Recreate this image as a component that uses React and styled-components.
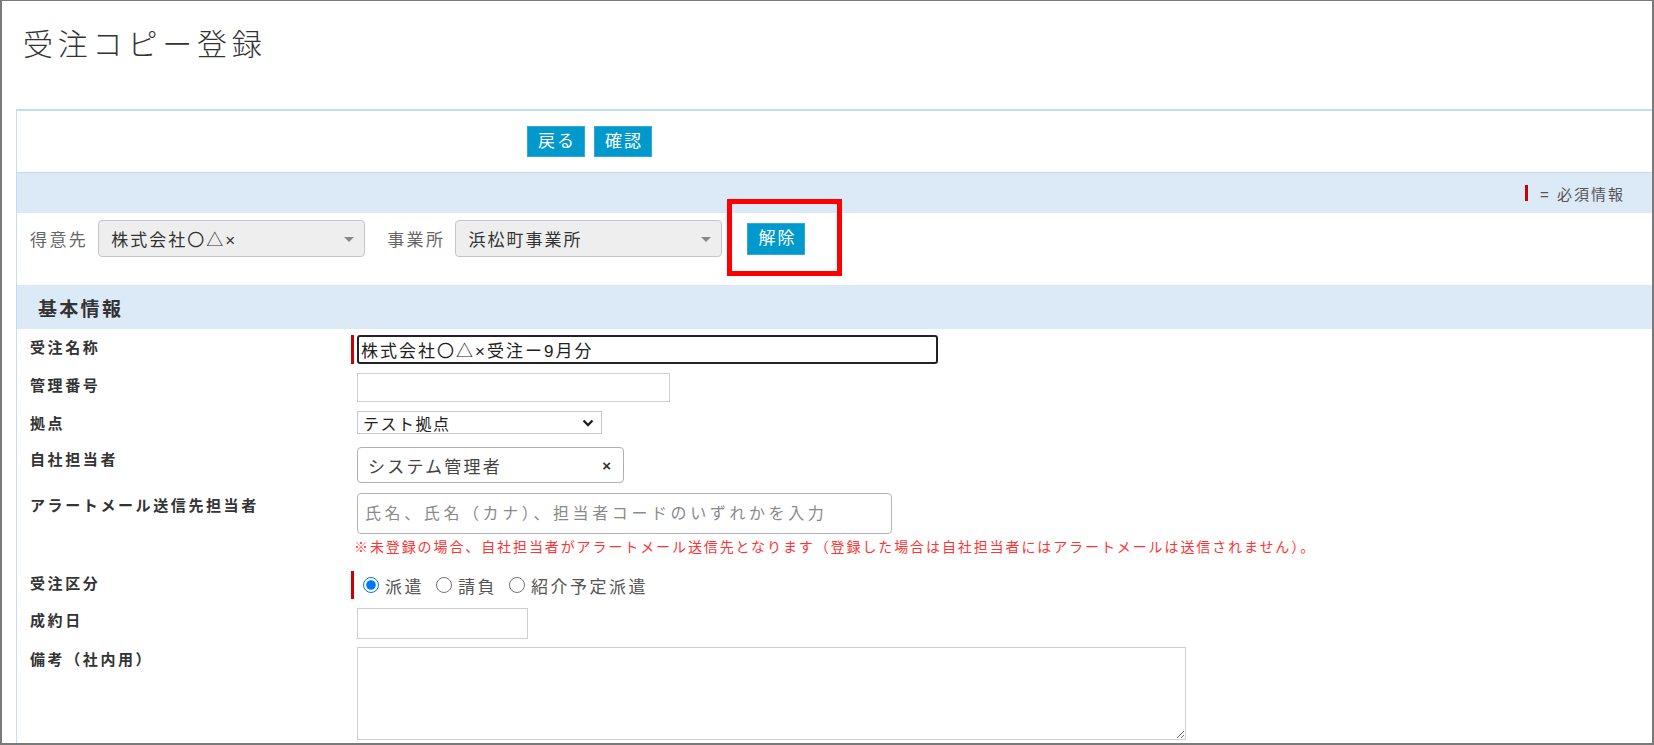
import styled, { createGlobalStyle } from 'styled-components';

const GlobalStyle = createGlobalStyle`
  html, body {
    margin: 0;
    padding: 0;
    background: #fff;
  }
  body {
    font-family: 'Liberation Sans', 'Noto Sans CJK JP', sans-serif;
    color: #333;
  }
  *, *::before, *::after {
    box-sizing: border-box;
  }
`;

const Frame = styled.div`
  height: 100vh;
  border: 2px solid #7a7a7a;
  border-top-width: 1px;
  padding-left: 14px;
  overflow: hidden;
`;

const PageTitle = styled.h1`
  margin: 24px 0 44px 7px;
  font-size: 30px;
  font-weight: 300;
  line-height: 40px;
  letter-spacing: 4.8px;
  color: #333;
`;

const Panel = styled.div`
  border-top: 2px solid #c4dcf2;
  border-left: 1px solid #c4dcf2;
  min-height: 100%;
`;

const Toolbar = styled.div`
  display: flex;
  align-items: center;
  gap: 9px;
  height: 61px;
  padding-left: 510px;
`;

const Button = styled.button`
  height: ${(p) => p.$h || 31}px;
  padding: 0 8px 0 10px;
  border: 1px solid #35a9d4;
  background: #0099cc;
  color: #fff;
  font-family: inherit;
  font-size: 17px;
  line-height: 1;
  letter-spacing: 2px;
  cursor: pointer;
`;

const RequiredBar = styled.div`
  display: flex;
  justify-content: flex-end;
  align-items: center;
  gap: 12px;
  height: 41px;
  padding-right: 27px;
  border-top: 1px solid #c4dcf2;
  background: #dce9f7;
  font-size: 15px;
  letter-spacing: 2px;
  color: #555;
`;

const RequiredMark = styled.span`
  width: 3px;
  height: 16px;
  background: #cc0000;
`;

const FilterRow = styled.div`
  display: flex;
  align-items: center;
  height: 72px;
  padding: 7px 0 28px 13px;
`;

const FilterLabel = styled.span`
  margin: 0 10px 0 ${(p) => p.$indent || 0}px;
  font-size: 17px;
  letter-spacing: 2.4px;
  color: #666;
`;

const Combo = styled.div`
  position: relative;
  display: flex;
  align-items: center;
  width: 267px;
  height: 37px;
  padding-left: 12px;
  background: #eee;
  border: 1px solid #c6c6c6;
  border-radius: 4px;
  font-size: 17px;
  letter-spacing: 2px;
  color: #333;

  &::after {
    content: '';
    position: absolute;
    right: 10px;
    top: 50%;
    margin-top: -2px;
    border-left: 5px solid transparent;
    border-right: 5px solid transparent;
    border-top: 5px solid #888;
  }
`;

/* red call-out drawn around the clear button */
const Spotlight = styled.div`
  position: relative;
  display: flex;
  margin-left: 25px;

  &::after {
    content: '';
    position: absolute;
    left: -20px;
    right: -37px;
    top: -24px;
    bottom: -21px;
    border: 5px solid #ff0000;
    pointer-events: none;
  }
`;

const SectionHeader = styled.h2`
  display: flex;
  align-items: center;
  height: 44px;
  margin: 0;
  padding-left: 21px;
  background: #dce9f7;
  font-size: 19px;
  font-weight: bold;
  letter-spacing: 2.3px;
  color: #333;
`;

const FieldRow = styled.div`
  display: grid;
  grid-template-columns: 334px 1fr;
  align-items: start;
  margin-top: ${(p) => p.$gap}px;
`;

const FieldLabel = styled.div`
  padding: 3px 0 0 13px;
  font-size: 15px;
  font-weight: bold;
  line-height: 20px;
  letter-spacing: 2.6px;
  color: #333;
`;

const FieldBody = styled.div`
  display: flex;
  flex-direction: ${(p) => (p.$stack ? 'column' : 'row')};
  align-items: flex-start;
  padding-left: ${(p) => (p.$required ? 3 : 6)}px;
  border-left: ${(p) => (p.$required ? '3px solid #cc0000' : 'none')};
`;

const TextInput = styled.input`
  width: ${(p) => p.$w}px;
  height: ${(p) => p.$h}px;
  padding: 0 4px;
  border: 1px solid #cfcfcf;
  border-radius: 0;
  background: #fff;
  font-family: inherit;
  font-size: 17px;
  letter-spacing: 2px;
  color: #222;
  outline: none;
`;

const ActiveInput = styled(TextInput)`
  padding: 0 2px;
  border: 2px solid #222;
  border-radius: 3px;
`;

const SearchInput = styled(TextInput)`
  padding: 0 7px;
  border: 1px solid #b4b4b4;
  border-radius: 4px;
  font-size: 16px;
  letter-spacing: 3.6px;

  &::placeholder {
    color: #8a8a8a;
  }
`;

const Dropdown = styled.div`
  display: flex;
  align-items: center;
  justify-content: space-between;
  width: 245px;
  height: 23px;
  padding: 0 7px 0 5px;
  border: 1px solid #c8c8c8;
  font-size: 16px;
  letter-spacing: 1.5px;
  color: #222;
`;

const Picker = styled.div`
  display: flex;
  align-items: center;
  justify-content: space-between;
  width: 267px;
  height: 36px;
  padding: 0 12px 0 10px;
  border: 1px solid #b0b0b0;
  border-radius: 4px;
  font-size: 17px;
  letter-spacing: 2.2px;
  color: #444;
`;

const ClearMark = styled.span`
  font-family: 'Liberation Sans', sans-serif;
  font-size: 15px;
  font-weight: bold;
  letter-spacing: 0;
  color: #333;
`;

const Note = styled.p`
  margin: 4px 0 0 -3px;
  font-size: 14px;
  line-height: 18px;
  letter-spacing: 1.9px;
  color: #ff3333;
`;

const RadioGroup = styled.div`
  display: flex;
  align-items: center;
  gap: 12px;
  height: 28px;
  padding-left: 6px;
`;

const RadioOption = styled.label`
  display: inline-flex;
  align-items: center;
  gap: 6px;
  font-size: 17px;
  letter-spacing: 2.5px;
  color: #555;
`;

const Radio = styled.input`
  width: 16px;
  height: 16px;
  margin: 0;
  accent-color: #0075ff;
`;

const Memo = styled.textarea`
  width: 829px;
  height: 93px;
  border: 1px solid #cfcfcf;
  font-family: inherit;
  font-size: 16px;
  outline: none;
`;

const Chevron = () => (
  <svg width="12" height="8" viewBox="0 0 12 8">
    <polyline points="1.5,1.5 6,6 10.5,1.5" fill="none" stroke="#222" strokeWidth="2.4" />
  </svg>
);

const OrderCopyPage = () => {
  return (
    <Frame>
      <GlobalStyle />
      <PageTitle>受注コピー登録</PageTitle>
      <Panel>
        <Toolbar>
          <Button>戻る</Button>
          <Button>確認</Button>
        </Toolbar>
        <RequiredBar>
          <RequiredMark />
          <span>= 必須情報</span>
        </RequiredBar>
        <FilterRow>
          <FilterLabel>得意先</FilterLabel>
          <Combo>株式会社〇△×</Combo>
          <FilterLabel $indent={22}>事業所</FilterLabel>
          <Combo>浜松町事業所</Combo>
          <Spotlight>
            <Button $h={32}>解除</Button>
          </Spotlight>
        </FilterRow>
        <SectionHeader>基本情報</SectionHeader>

        <FieldRow $gap={6}>
          <FieldLabel>受注名称</FieldLabel>
          <FieldBody $required>
            <ActiveInput $w={581} $h={29} defaultValue="株式会社〇△×受注ー9月分" />
          </FieldBody>
        </FieldRow>
        <FieldRow $gap={9}>
          <FieldLabel>管理番号</FieldLabel>
          <FieldBody>
            <TextInput $w={313} $h={29} />
          </FieldBody>
        </FieldRow>
        <FieldRow $gap={9}>
          <FieldLabel>拠点</FieldLabel>
          <FieldBody>
            <Dropdown>
              <span>テスト拠点</span>
              <Chevron />
            </Dropdown>
          </FieldBody>
        </FieldRow>
        <FieldRow $gap={13}>
          <FieldLabel>自社担当者</FieldLabel>
          <FieldBody>
            <Picker>
              <span>システム管理者</span>
              <ClearMark>×</ClearMark>
            </Picker>
          </FieldBody>
        </FieldRow>
        <FieldRow $gap={10}>
          <FieldLabel>アラートメール送信先担当者</FieldLabel>
          <FieldBody $stack>
            <SearchInput $w={535} $h={41} placeholder="氏名、氏名（カナ）、担当者コードのいずれかを入力" />
            <Note>※未登録の場合、自社担当者がアラートメール送信先となります（登録した場合は自社担当者にはアラートメールは送信されません）。</Note>
          </FieldBody>
        </FieldRow>
        <FieldRow $gap={15}>
          <FieldLabel>受注区分</FieldLabel>
          <FieldBody $required>
            <RadioGroup>
              <RadioOption>
                <Radio type="radio" name="orderType" defaultChecked />
                派遣
              </RadioOption>
              <RadioOption>
                <Radio type="radio" name="orderType" />
                請負
              </RadioOption>
              <RadioOption>
                <Radio type="radio" name="orderType" />
                紹介予定派遣
              </RadioOption>
            </RadioGroup>
          </FieldBody>
        </FieldRow>
        <FieldRow $gap={9}>
          <FieldLabel>成約日</FieldLabel>
          <FieldBody>
            <TextInput $w={171} $h={31} />
          </FieldBody>
        </FieldRow>
        <FieldRow $gap={8}>
          <FieldLabel>備考（社内用）</FieldLabel>
          <FieldBody>
            <Memo />
          </FieldBody>
        </FieldRow>
      </Panel>
    </Frame>
  );
};

export default OrderCopyPage;
